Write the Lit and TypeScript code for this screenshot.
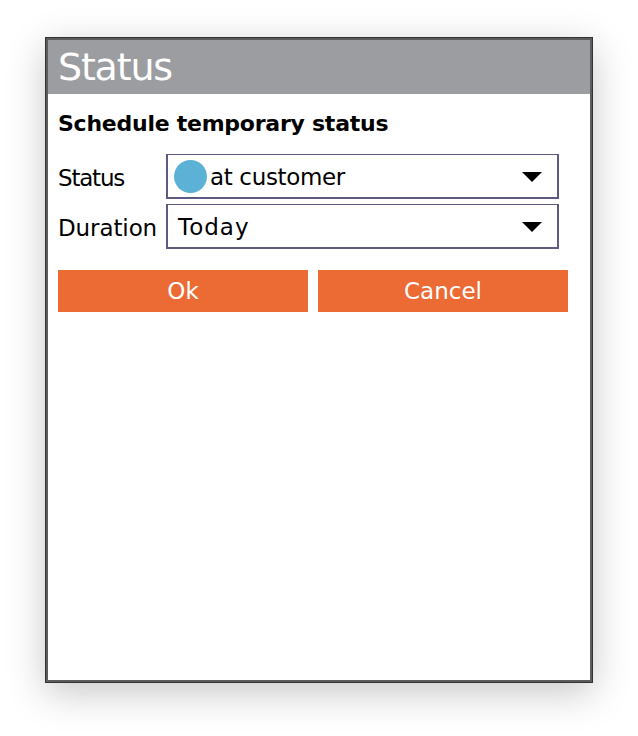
import { LitElement, html, css } from 'lit';
import { customElement } from 'lit/decorators.js';

@customElement('app-root')
export class AppRoot extends LitElement {
  static styles = css`
    :host {
      display: block;
      width: 638px;
      height: 736px;
      padding: 37px 45px 53px;
      box-sizing: border-box;
      font-family: 'DejaVu Sans', sans-serif;
      color: #000;
      background: #fff;
    }
    .window {
      height: 646px;
      box-sizing: border-box;
      display: flex;
      flex-direction: column;
      background: #fff;
      border: 3px solid #5c5c5c;
      outline: 1px solid #333;
      outline-offset: -1px;
      box-shadow: 0 10px 36px rgba(0, 0, 0, 0.22);
    }
    .title {
      height: 54px;
      flex: none;
      display: flex;
      align-items: center;
      padding-left: 10px;
      background: #9c9da1;
      color: #fff;
      font-size: 38px;
      letter-spacing: -1.2px;
    }
    .content {
      padding: 16px 10px 0;
      display: flex;
      flex-direction: column;
    }
    h2 {
      margin: 0 0 16px;
      font-size: 22px;
      line-height: 28px;
      font-weight: 700;
      letter-spacing: -0.25px;
    }
    .row {
      display: flex;
      align-items: center;
      height: 45px;
      margin-bottom: 5px;
      font-size: 23px;
    }
    .label {
      width: 108px;
      flex: none;
      padding-top: 2px;
      letter-spacing: -0.1px;
    }
    .label.narrow {
      letter-spacing: -1.2px;
    }
    .select {
      width: 393px;
      height: 45px;
      box-sizing: border-box;
      display: flex;
      align-items: center;
      border: 2px solid #5f5a80;
      border-top-width: 1px;
      padding: 0 15px 0 6px;
    }
    .select.plain {
      padding-left: 10px;
    }
    .dot {
      width: 33px;
      height: 33px;
      flex: none;
      margin-right: 3px;
      border-radius: 50%;
      background: #5bb2d6;
    }
    .value {
      flex: 1;
      padding-top: 2px;
      letter-spacing: -0.35px;
    }
    .value.wide {
      letter-spacing: 1px;
    }
    .arrow {
      width: 20px;
      height: 10px;
      flex: none;
      margin-top: 2px;
    }
    .buttons {
      display: flex;
      gap: 10px;
      margin-top: 16px;
    }
    .btn {
      width: 250px;
      height: 42px;
      display: flex;
      align-items: center;
      justify-content: center;
      background: #ec6a33;
      color: #fff;
      font-size: 23px;
    }
  `;

  renderArrow() {
    return html`<svg class="arrow" viewBox="0 0 20 10"><path d="M0 0H20L10 10Z" fill="#000" /></svg>`;
  }

  render() {
    return html`
      <div class="window">
        <div class="title">Status</div>
        <div class="content">
          <h2>Schedule temporary status</h2>
          <div class="row">
            <span class="label narrow">Status</span>
            <div class="select">
              <span class="dot"></span>
              <span class="value">at customer</span>
              ${this.renderArrow()}
            </div>
          </div>
          <div class="row">
            <span class="label">Duration</span>
            <div class="select plain">
              <span class="value wide">Today</span>
              ${this.renderArrow()}
            </div>
          </div>
          <div class="buttons">
            <div class="btn">Ok</div>
            <div class="btn">Cancel</div>
          </div>
        </div>
      </div>
    `;
  }
}
